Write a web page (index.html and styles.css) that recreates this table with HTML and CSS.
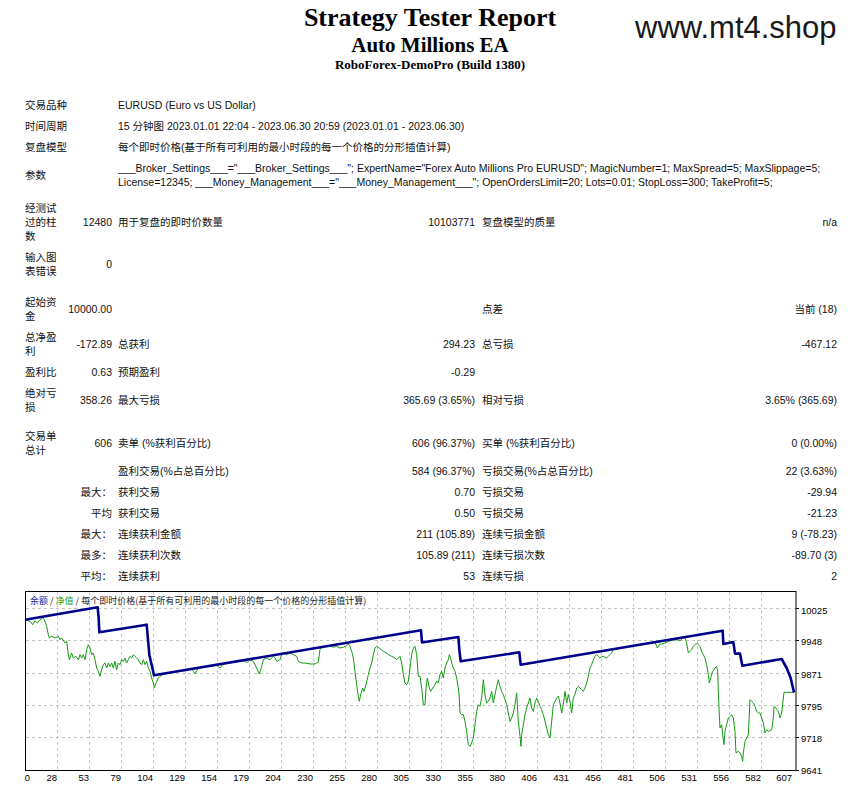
FILE: index.html
```html
<!DOCTYPE html>
<html lang="zh">
<head>
<meta charset="utf-8">
<title>Strategy Tester Report</title>
<link rel="stylesheet" href="styles.css">
</head>
<body>
<header class="head">
  <h1 class="title">Strategy Tester Report</h1>
  <h2 class="sub">Auto Millions EA</h2>
  <h3 class="server">RoboForex-DemoPro (Build 1380)</h3>
</header>
<div class="watermark">www.mt4.shop</div>

<section class="report">
  <div class="row wide"><div class="lbl">交易品种</div><div class="val">EURUSD (Euro vs US Dollar)</div></div>
  <div class="row wide"><div class="lbl">时间周期</div><div class="val">15 分钟图 2023.01.01 22:04 - 2023.06.30 20:59 (2023.01.01 - 2023.06.30)</div></div>
  <div class="row wide"><div class="lbl">复盘模型</div><div class="val">每个即时价格(基于所有可利用的最小时段的每一个价格的分形插值计算)</div></div>
  <div class="row wide"><div class="lbl">参数</div><div class="val">___Broker_Settings___="___Broker_Settings___"; ExpertName="Forex Auto Millions Pro EURUSD"; MagicNumber=1; MaxSpread=5; MaxSlippage=5;<br>License=12345; ___Money_Management___="___Money_Management___"; OpenOrdersLimit=20; Lots=0.01; StopLoss=300; TakeProfit=5;</div></div>
  <div class="gap5"></div>
  <div class="row"><div class="c1">经测试过的柱数</div><div class="num">12480</div><div class="c3">用于复盘的即时价数量</div><div class="num">10103771</div><div class="c5">复盘模型的质量</div><div class="num">n/a</div></div>
  <div class="row"><div class="c1">输入图表错误</div><div class="num">0</div><div></div><div></div><div></div><div></div></div>
  <div class="gap10"></div>
  <div class="row"><div class="c1">起始资金</div><div class="num">10000.00</div><div></div><div></div><div class="c5">点差</div><div class="num">当前 (18)</div></div>
  <div class="row"><div class="c1">总净盈利</div><div class="num">-172.89</div><div class="c3">总获利</div><div class="num">294.23</div><div class="c5">总亏损</div><div class="num">-467.12</div></div>
  <div class="row"><div class="c1">盈利比</div><div class="num">0.63</div><div class="c3">预期盈利</div><div class="num">-0.29</div><div></div><div></div></div>
  <div class="row"><div class="c1">绝对亏损</div><div class="num">358.26</div><div class="c3">最大亏损</div><div class="num">365.69 (3.65%)</div><div class="c5">相对亏损</div><div class="num">3.65% (365.69)</div></div>
  <div class="gap8"></div>
  <div class="row"><div class="c1">交易单总计</div><div class="num">606</div><div class="c3">卖单 (%获利百分比)</div><div class="num">606 (96.37%)</div><div class="c5">买单 (%获利百分比)</div><div class="num">0 (0.00%)</div></div>
  <div class="row"><div class="c1"></div><div class="num"></div><div class="c3">盈利交易(%占总百分比)</div><div class="num">584 (96.37%)</div><div class="c5">亏损交易(%占总百分比)</div><div class="num">22 (3.63%)</div></div>
  <div class="row"><div class="c1"></div><div class="num">最大：</div><div class="c3">获利交易</div><div class="num">0.70</div><div class="c5">亏损交易</div><div class="num">-29.94</div></div>
  <div class="row"><div class="c1"></div><div class="num">平均</div><div class="c3">获利交易</div><div class="num">0.50</div><div class="c5">亏损交易</div><div class="num">-21.23</div></div>
  <div class="row"><div class="c1"></div><div class="num">最大：</div><div class="c3">连续获利金额</div><div class="num">211 (105.89)</div><div class="c5">连续亏损金额</div><div class="num">9 (-78.23)</div></div>
  <div class="row"><div class="c1"></div><div class="num">最多：</div><div class="c3">连续获利次数</div><div class="num">105.89 (211)</div><div class="c5">连续亏损次数</div><div class="num">-89.70 (3)</div></div>
  <div class="row"><div class="c1"></div><div class="num">平均：</div><div class="c3">连续获利</div><div class="num">53</div><div class="c5">连续亏损</div><div class="num">2</div></div>
</section>

<svg class="chart" width="857" height="204" viewBox="0 0 857 204" xmlns="http://www.w3.org/2000/svg">
  <rect x="25.5" y="3.5" width="770.5" height="179" fill="#fff"/>
  <g class="grid">
    <line x1="26" y1="20.5" x2="796" y2="20.5"/>
    <line x1="26" y1="52.5" x2="796" y2="52.5"/>
    <line x1="26" y1="85.5" x2="796" y2="85.5"/>
    <line x1="26" y1="117.5" x2="796" y2="117.5"/>
    <line x1="26" y1="149.5" x2="796" y2="149.5"/>
    <line x1="57.5" y1="4" x2="57.5" y2="182"/>
    <line x1="89.5" y1="4" x2="89.5" y2="182"/>
    <line x1="121.5" y1="4" x2="121.5" y2="182"/>
    <line x1="153.5" y1="4" x2="153.5" y2="182"/>
    <line x1="185.5" y1="4" x2="185.5" y2="182"/>
    <line x1="217.5" y1="4" x2="217.5" y2="182"/>
    <line x1="249.5" y1="4" x2="249.5" y2="182"/>
    <line x1="281.5" y1="4" x2="281.5" y2="182"/>
    <line x1="313.5" y1="4" x2="313.5" y2="182"/>
    <line x1="345.5" y1="4" x2="345.5" y2="182"/>
    <line x1="377.5" y1="4" x2="377.5" y2="182"/>
    <line x1="409.5" y1="4" x2="409.5" y2="182"/>
    <line x1="441.5" y1="4" x2="441.5" y2="182"/>
    <line x1="473.5" y1="4" x2="473.5" y2="182"/>
    <line x1="505.5" y1="4" x2="505.5" y2="182"/>
    <line x1="537.5" y1="4" x2="537.5" y2="182"/>
    <line x1="569.5" y1="4" x2="569.5" y2="182"/>
    <line x1="601.5" y1="4" x2="601.5" y2="182"/>
    <line x1="633.5" y1="4" x2="633.5" y2="182"/>
    <line x1="665.5" y1="4" x2="665.5" y2="182"/>
    <line x1="697.5" y1="4" x2="697.5" y2="182"/>
    <line x1="729.5" y1="4" x2="729.5" y2="182"/>
    <line x1="761.5" y1="4" x2="761.5" y2="182"/>
  </g>

  <g transform="scale(0.333333)">
    <polyline class="equity" vector-effect="non-scaling-stroke" points="75,95 90,100 98,110 105,98 112,105 120,95 128,90 133,95 140,115 145,140 148,150 155,145 165,150 175,145 180,155 185,150 195,165 200,160 205,200 208,215 215,195 220,210 228,205 235,215 240,200 245,210 250,200 255,215 260,185 265,170 270,180 275,200 280,195 285,215 290,240 295,250 300,265 305,245 310,230 315,225 320,240 325,225 330,235 335,225 340,240 345,220 350,245 355,225 360,230 365,215 370,220 375,210 380,225 385,215 390,205 395,210 400,200 405,205 410,210 415,215 420,225 425,230 430,215 435,230 440,220 445,240 450,250 455,270 460,285 463,300 468,285 475,270 480,265 490,258 575,243 580,250 585,258 590,248 595,240 650,230 655,236 660,240 665,234 670,227 730,217 740,224 750,215 760,220 770,240 778,258 785,235 790,215 800,210 810,215 820,205 825,210 830,220 840,215 845,200 850,195 860,200 870,195 880,200 890,205 895,220 905,225 915,225 930,228 945,228 955,222 960,185 965,178 975,175 990,172 1000,178 1010,175 1020,180 1030,178 1040,172 1045,168 1050,175 1055,190 1060,210 1065,250 1070,290 1075,325 1078,340 1082,320 1088,300 1092,310 1098,290 1105,260 1110,240 1115,225 1120,200 1125,180 1130,175 1140,182 1150,190 1160,195 1165,200 1175,205 1185,210 1190,215 1195,210 1200,205 1205,225 1210,260 1215,285 1220,290 1225,280 1230,240 1235,200 1240,180 1245,175 1250,200 1255,265 1260,265"/>
    <polyline class="balance" vector-effect="non-scaling-stroke" points="75,95 293,58 296,90 298,133 440,110 448,200 462,262 1263,127 1266,163 1275,162"/>
  </g>
  <g transform="translate(420,0) scale(0.333333)">
    <polyline class="equity" vector-effect="non-scaling-stroke" points="0,265 5,300 10,350 15,350 18,300 22,270 28,300 32,310 38,300 45,290 50,280 55,285 60,260 65,250 70,270 75,240 80,225 85,215 88,200 92,210 95,225 100,240 105,250 110,270 115,300 118,330 120,375 125,380 130,380 135,400 140,430 145,470 150,475 155,465 160,450 165,410 170,370 175,350 180,355 185,330 190,275 195,320 200,345 205,340 210,330 215,310 220,345 225,320 230,295 235,275 240,295 245,310 250,320 255,335 260,350 265,375 270,400 275,390 280,375 285,350 290,315 295,400 300,445 303,475 305,440 310,410 315,380 320,360 325,345 330,330 335,360 340,370 345,345 350,330 355,340 360,355 365,365 370,380 375,400 380,420 385,440 390,450 395,400 400,350 405,340 410,330 415,325 420,345 425,375 430,350 435,310 440,345 445,320 450,340 455,375 460,330 465,320 470,300 475,295 480,300 485,305 490,310 495,300 500,285 505,265 510,240 515,230 520,215 525,205 530,200 535,205 540,210 545,205 550,205 560,210 565,205 570,200 575,195 580,184 705,162 712,180 718,170 725,168 735,165 745,160 760,156 770,155 780,158 790,149 795,150 800,165 805,195 810,190 815,185 820,175 825,170 830,165 835,170 840,175 845,190 850,200 855,210 860,230 865,260 868,285 872,270 878,250 885,240 890,235 893,250 895,310 898,380 900,420 905,410 908,440 912,470 915,430 920,410 925,390 930,385 935,380 940,390 945,430 948,495 955,490 960,495 965,505 968,520 970,495 975,460 980,450 985,440 990,335 995,340 1000,345 1005,355 1010,370 1015,375 1020,375 1025,390 1030,405 1035,435 1040,425 1045,430 1050,428 1055,425 1060,390 1062,355 1068,360 1075,370 1080,390 1085,375 1090,330 1092,313 1122,313"/>
    <polyline class="balance" vector-effect="non-scaling-stroke" points="15,162 115,147 118,185 122,220 298,193 302,230 908,128 910,168 940,162 945,197 960,197 967,233 1085,213 1100,240 1112,270 1122,313"/>
  </g>

  <rect class="frame" x="25.5" y="3.5" width="770.5" height="179"/>
  <g class="ticks">
    <line x1="796" y1="20.5" x2="799" y2="20.5"/>
    <line x1="796" y1="52.5" x2="799" y2="52.5"/>
    <line x1="796" y1="85.5" x2="799" y2="85.5"/>
    <line x1="796" y1="117.5" x2="799" y2="117.5"/>
    <line x1="796" y1="149.5" x2="799" y2="149.5"/>
    <line x1="796" y1="182.5" x2="799" y2="182.5"/>
  </g>

  <text class="legend" x="30" y="16"><tspan class="lg-bal">余额</tspan> / <tspan class="lg-eq">净值</tspan> / 每个即时价格(基于所有可利用的最小时段的每一个价格的分形插值计算)</text>

  <g class="axis">
    <text x="801" y="26">10025</text>
    <text x="801" y="57">9948</text>
    <text x="801" y="89.5">9871</text>
    <text x="801" y="122">9795</text>
    <text x="801" y="154">9718</text>
    <text x="801" y="186">9641</text>
  </g>
  <g class="axis xaxis">
    <text x="30" y="193">0</text>
    <text x="57" y="193">28</text>
    <text x="89" y="193">53</text>
    <text x="121" y="193">79</text>
    <text x="153" y="193">104</text>
    <text x="185" y="193">129</text>
    <text x="217" y="193">154</text>
    <text x="249" y="193">179</text>
    <text x="281" y="193">204</text>
    <text x="313" y="193">230</text>
    <text x="345" y="193">255</text>
    <text x="377" y="193">280</text>
    <text x="409" y="193">305</text>
    <text x="441" y="193">330</text>
    <text x="473" y="193">355</text>
    <text x="505" y="193">380</text>
    <text x="537" y="193">406</text>
    <text x="569" y="193">431</text>
    <text x="601" y="193">456</text>
    <text x="633" y="193">481</text>
    <text x="665" y="193">506</text>
    <text x="697" y="193">531</text>
    <text x="729" y="193">556</text>
    <text x="761" y="193">582</text>
    <text x="792" y="193">607</text>
  </g>
</svg>
</body>
</html>
```

FILE: styles.css
```css
* { box-sizing: border-box; }

body {
  margin: 0;
  width: 857px;
  height: 792px;
  background: #fff;
  color: #000;
  font-family: "Liberation Sans", "Noto Sans CJK SC", sans-serif;
  position: relative;
  overflow: hidden;
}

.head {
  padding-top: 3px;
  padding-left: 3px;
  text-align: center;
  font-family: "Liberation Serif", "Noto Sans CJK SC", serif;
  font-weight: bold;
}

.title { margin: 0; font-size: 26px; line-height: 30px; }
.sub { margin: 0; font-size: 21px; line-height: 24px; }
.server { margin: 0; font-size: 13px; line-height: 16px; }

.watermark {
  position: absolute;
  left: 635px;
  top: 13px;
  font-family: "Liberation Sans", Arial, sans-serif;
  font-size: 31px;
  line-height: 30px;
  color: #1a1a1a;
}

.report {
  margin: 21.5px 0 0 25px;
  width: 812px;
  font-size: 10.5px;
  line-height: 14px;
  color: #111;
}

.row {
  display: grid;
  grid-template-columns: 37px 50px 200px 163px 200px 162px;
  align-items: center;
  padding: 3.5px 0;
}

.row.wide { grid-template-columns: 87px 725px; }
.wide .val { padding-left: 6px; white-space: nowrap; }

.num { text-align: right; white-space: nowrap; }
.c3 { padding-left: 6px; white-space: nowrap; }
.c5 { padding-left: 7px; white-space: nowrap; }

.gap5 { height: 5px; }
.gap8 { height: 8px; }
.gap10 { height: 10px; }

.chart { display: block; margin-top: 1.5px; }

.grid line { stroke: #c4c4c4; stroke-width: 1; stroke-dasharray: 3 3; }
.ticks line { stroke: #000; stroke-width: 1; }
.frame { fill: none; stroke: #000; stroke-width: 1; }

.equity { fill: none; stroke: #139a13; stroke-width: 1; stroke-linejoin: round; }
.balance { fill: none; stroke: #00008b; stroke-width: 2.6; stroke-linejoin: round; }

.legend { font-family: "Noto Sans CJK SC", sans-serif; font-size: 9px; fill: #222; }
.lg-bal { fill: #1a1aa0; }
.lg-eq { fill: #12a012; }

.axis text { font-family: "Liberation Sans", sans-serif; font-size: 9.5px; fill: #000; }
.xaxis text { text-anchor: end; }
```
